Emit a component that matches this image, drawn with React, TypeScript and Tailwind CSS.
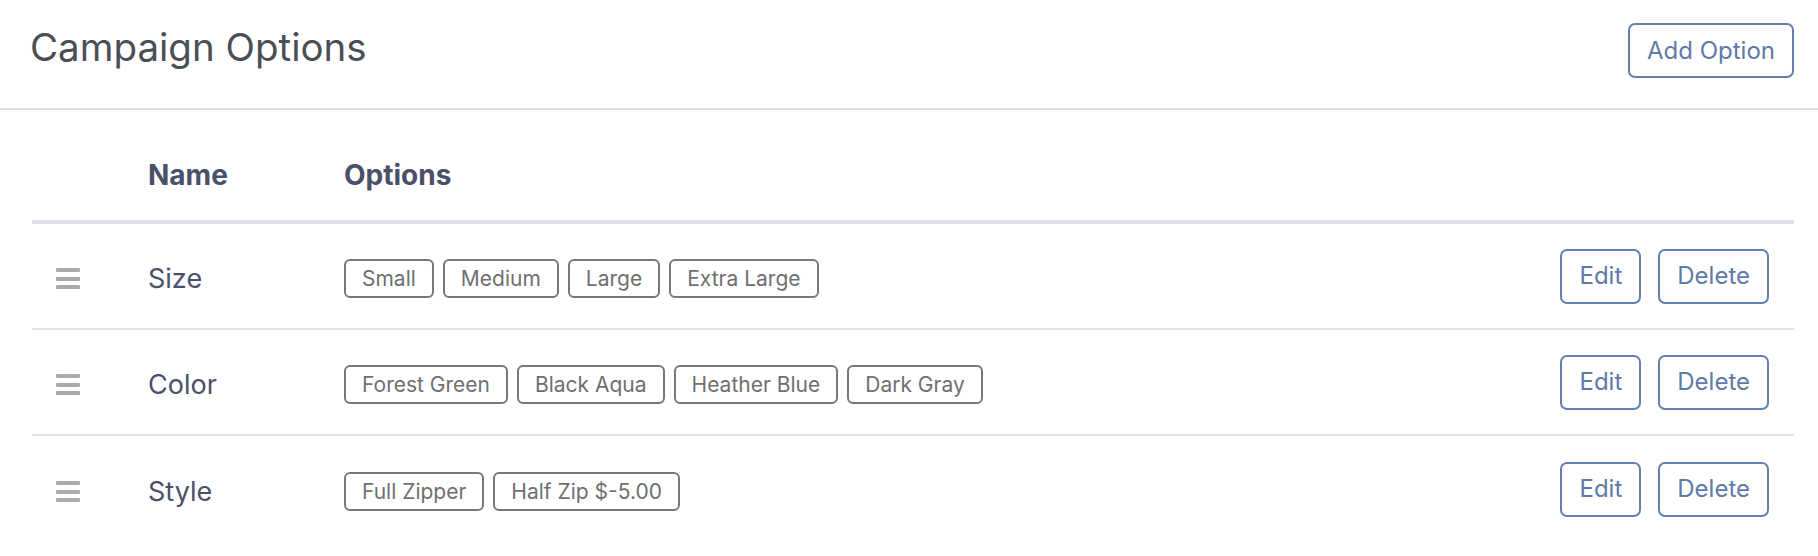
const OPTIONS = [
  { id: 'size', name: 'Size', values: ['Small', 'Medium', 'Large', 'Extra Large'] },
  { id: 'color', name: 'Color', values: ['Forest Green', 'Black Aqua', 'Heather Blue', 'Dark Gray'] },
  { id: 'style', name: 'Style', values: ['Full Zipper', 'Half Zip $-5.00'] },
]

function DragHandle() {
  return (
    <div className="flex w-[24px] flex-col gap-[4.5px]">
      <span className="h-[4px] w-full rounded-[1px] bg-[#aaaaaa]" />
      <span className="h-[4px] w-full rounded-[1px] bg-[#aaaaaa]" />
      <span className="h-[4px] w-full rounded-[1px] bg-[#aaaaaa]" />
    </div>
  )
}

function OutlineButton({ label }: { label: string }) {
  return (
    <button className="flex h-[55px] items-center rounded-[7px] border-2 border-[#6480ad] bg-white px-[17px] text-[24px] text-[#5f7aa8]">
      {label}
    </button>
  )
}

function Tag({ label }: { label: string }) {
  return (
    <span className="flex h-[39px] items-center rounded-[6px] border-2 border-[#787878] px-[16px] text-[21px] text-[#6f6f6f]">
      {label}
    </span>
  )
}

export default function App() {
  return (
    <div className="min-h-[556px] bg-white font-['Inter','Noto_Sans',sans-serif]">
      <header className="flex h-[110px] items-start justify-between border-b-2 border-[#dddddd] pl-[30px] pr-[24px] pt-[23px]">
        <h1 className="text-[38.5px] leading-[48px] font-normal text-[#4a4f56]">Campaign Options</h1>
        <OutlineButton label="Add Option" />
      </header>

      <div className="pl-[32px] pr-[24px] pt-[20px]">
        <div className="grid h-[94px] grid-cols-[116px_196px_1fr_auto] items-center border-b-4 border-[#dee2e6] text-[28px] font-bold text-[#4a5068]">
          <div />
          <div>Name</div>
          <div>Options</div>
          <div />
        </div>

        {OPTIONS.map((opt, i) => (
          <div
            key={opt.id}
            className={`grid h-[106px] grid-cols-[116px_196px_1fr_auto] items-center ${
              i < OPTIONS.length - 1 ? 'border-b-2 border-[#dee2e6]' : ''
            }`}
          >
            <div className="mt-[5px] pl-[24px]">
              <DragHandle />
            </div>
            <div className="mt-[6px] text-[27px] text-[#4a5068]">{opt.name}</div>
            <div className="mt-[5px] flex flex-wrap gap-[9px]">
              {opt.values.map((v) => (
                <Tag key={v} label={v} />
              ))}
            </div>
            <div className="flex gap-[17px] pr-[25px]">
              <OutlineButton label="Edit" />
              <OutlineButton label="Delete" />
            </div>
          </div>
        ))}
      </div>
    </div>
  )
}
